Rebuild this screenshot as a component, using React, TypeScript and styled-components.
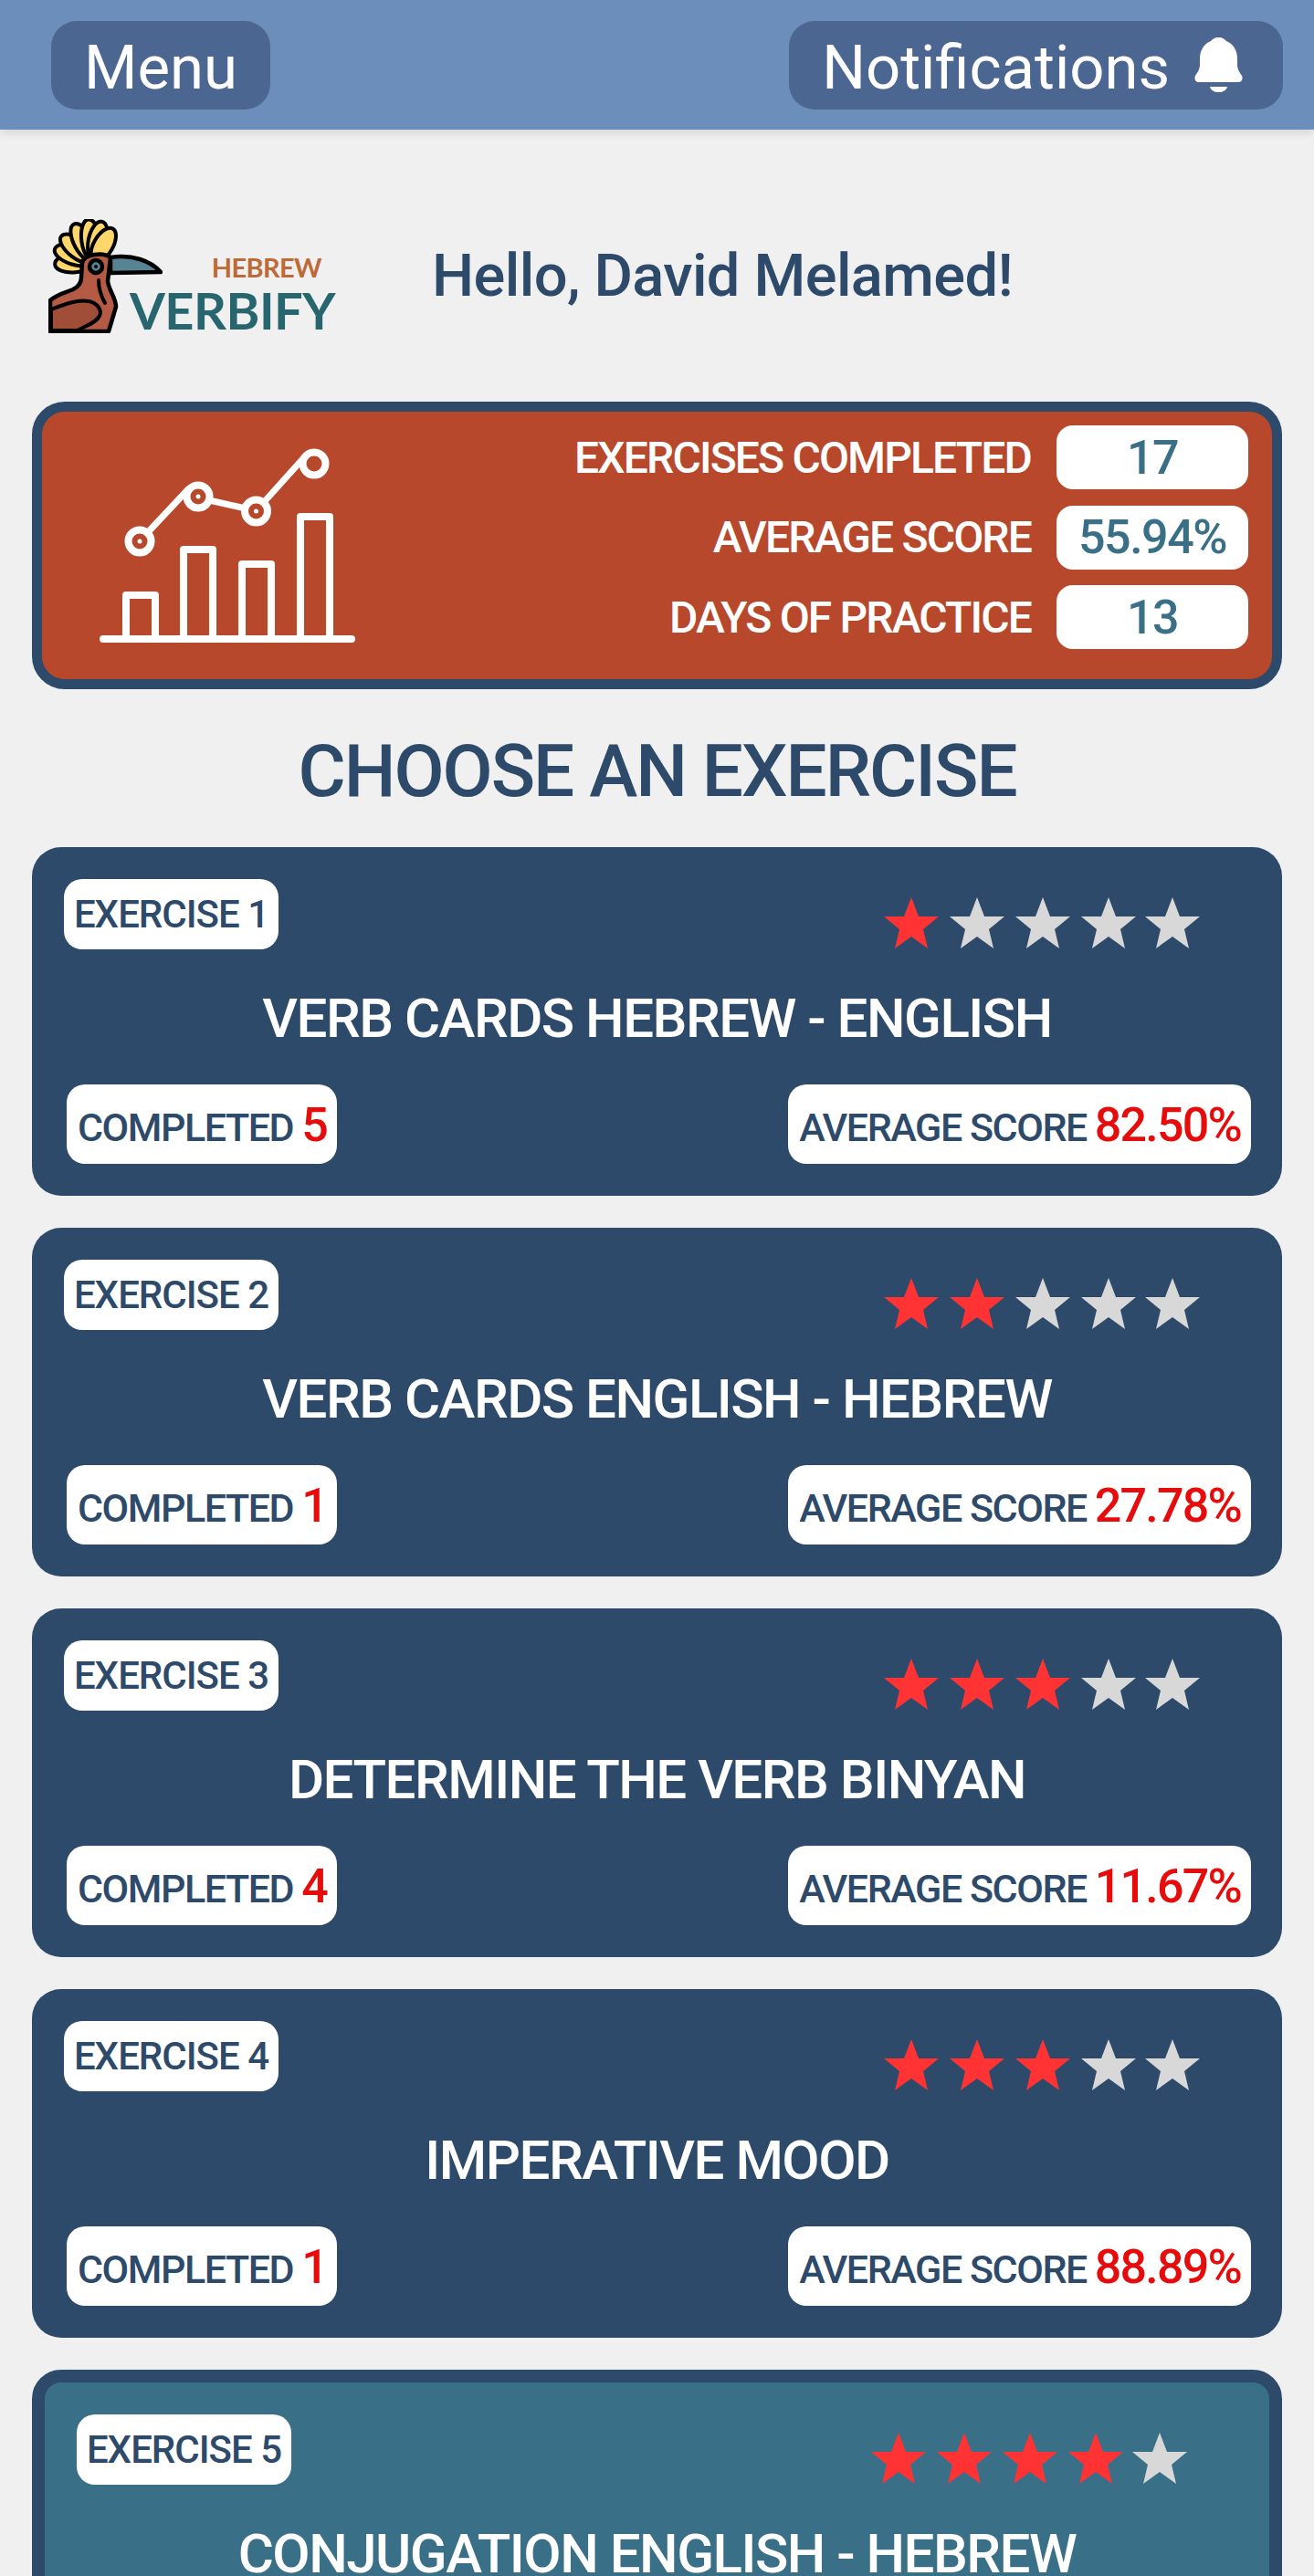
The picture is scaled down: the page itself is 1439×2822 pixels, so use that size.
import React from "react";
import styled, { createGlobalStyle } from "styled-components";

const GlobalStyle = createGlobalStyle`
  html, body {
    margin: 0;
    padding: 0;
    background: #f0f0f0;
  }
  * {
    box-sizing: border-box;
  }
`;

const Page = styled.div`
  width: 1439px;
  height: 2822px;
  overflow: hidden;
  background: #f0f0f0;
  font-family: Roboto, "Liberation Sans", sans-serif;
`;

const Header = styled.header`
  display: flex;
  justify-content: space-between;
  align-items: center;
  height: 142px;
  padding: 0 34px 0 56px;
  background: #6c8eba;
  box-shadow: 0 3px 10px rgba(0, 0, 0, 0.12);
`;

const HeaderButton = styled.button`
  display: flex;
  align-items: center;
  gap: 27px;
  height: 97px;
  padding: 6px 36px 0;
  border: none;
  border-radius: 28px;
  background: #4b6691;
  color: #ffffff;
  font-family: inherit;
  font-size: 67px;
  font-weight: 400;

  svg {
    margin-top: -6px;
    margin-right: 8px;
  }
`;

const Intro = styled.div`
  display: flex;
  align-items: center;
  height: 298px;
  padding: 22px 0 0 53px;
`;

const Logo = styled.div`
  display: flex;
  align-items: flex-end;
  width: 420px;
  height: 125px;
`;

const LogoWords = styled.div`
  display: flex;
  flex-direction: column;
  align-items: flex-end;
  width: 224px;
  margin-left: -35px;
`;

const LogoSmall = styled.span`
  margin-right: 15px;
  color: #bd6a37;
  font-family: Lato, sans-serif;
  font-size: 29px;
  font-weight: 700;
  letter-spacing: -0.6px;
  line-height: 29px;
`;

const LogoBig = styled.span`
  margin-top: 8px;
  color: #27666f;
  font-family: Lato, sans-serif;
  font-size: 56px;
  font-weight: 700;
  letter-spacing: -0.5px;
  line-height: 50px;
`;

const Greeting = styled.h1`
  margin: 0;
  color: #2e4a6b;
  font-size: 65px;
  font-weight: 500;
  letter-spacing: -0.6px;
`;

const Content = styled.main`
  display: flex;
  flex-direction: column;
  padding: 0 35px;
`;

const StatsCard = styled.section`
  display: flex;
  justify-content: space-between;
  align-items: center;
  height: 315px;
  padding: 0 26px 0 63px;
  border: 11px solid #2e4a6b;
  border-radius: 36px;
  background: #b8482b;
`;

const StatsList = styled.div`
  display: grid;
  grid-template-columns: auto 210px;
  column-gap: 28px;
  row-gap: 17.5px;
  align-items: center;
  align-self: flex-start;
  margin-top: 15px;
`;

const StatLabel = styled.span`
  color: #ffffff;
  font-size: 48px;
  font-weight: 500;
  letter-spacing: -1.85px;
  text-align: right;
`;

const StatValue = styled.span`
  display: flex;
  justify-content: center;
  align-items: center;
  height: 70px;
  border-radius: 18px;
  background: #ffffff;
  color: #3a7087;
  font-size: 52px;
  font-weight: 500;
  letter-spacing: -1.5px;
`;

const Heading = styled.h2`
  margin: 45px 0 38px;
  color: #2e4a6b;
  font-size: 80px;
  font-weight: 500;
  letter-spacing: -2px;
  line-height: 90px;
  text-align: center;
`;

const Cards = styled.div`
  display: flex;
  flex-direction: column;
  gap: 35px;
`;

const Card = styled.article<{ $active?: boolean }>`
  display: flex;
  flex-direction: column;
  flex-shrink: 0;
  height: ${p => (p.$active ? "410px" : "382px")};
  padding: 35px;
  border: ${p => (p.$active ? "14px solid #2e4a6b" : "none")};
  border-radius: 32px;
  background: ${p => (p.$active ? "#3a7087" : "#2e4a6b")};
`;

const CardTop = styled.div`
  display: flex;
  justify-content: space-between;
  align-items: flex-start;
  height: 77px;
`;

const ExerciseTag = styled.span`
  display: flex;
  justify-content: center;
  align-items: center;
  width: 235px;
  height: 77px;
  border-radius: 20px;
  background: #ffffff;
  color: #2e4a6b;
  font-size: 42px;
  font-weight: 500;
  letter-spacing: -1px;
`;

const Stars = styled.div`
  display: flex;
  gap: 12px;
  margin-top: 20px;
  margin-right: 55px;

  svg:last-child {
    margin-left: -2px;
  }
`;

const CardTitle = styled.h3`
  margin: 41px 0 37px;
  color: #ffffff;
  font-size: 60px;
  font-weight: 500;
  letter-spacing: -1.5px;
  line-height: 70px;
  text-align: center;
`;

const CardBottom = styled.div`
  display: flex;
  justify-content: space-between;
  margin: 0 -1px 0 3px;
`;

const ResultPill = styled.span`
  display: flex;
  align-items: baseline;
  gap: 9px;
  height: 87px;
  padding: 14px 11px 0 12px;
  border-radius: 20px;
  background: #ffffff;
  color: #2e4a6b;
  font-size: 43px;
  font-weight: 500;
  letter-spacing: -1.45px;
`;

const ResultValue = styled.span`
  color: #e60c0c;
  font-size: 52px;
  letter-spacing: -1.8px;
`;

const Star = ({ on }: { on: boolean }) => (
  <svg width="60" height="56" viewBox="0 0 60 56">
    <polygon
      points="30,0 38,21 60,21 43,35 48,56 30,43 12,56 17,35 0,21 22,21"
      fill={on ? "#ff3333" : "#d8d8d8"}
    />
  </svg>
);

const Bell = () => (
  <svg width="53" height="60" viewBox="0 0 53 60" fill="#fff">
    <path d="M26.5 0 C31 0 33 2 35 4 C42 6.5 47 14 47 23 L47 30 C47 35 50 39 52 42 C53.5 45 52 49 48 49 L5 49 C1 49 -0.5 45 1 42 C3 39 6 35 6 30 L6 23 C6 14 11 6.5 18 4 C20 2 22 0 26.5 0 Z" />
    <path d="M17 54 H36 C35 58 31 60 26.5 60 C22 60 18 58 17 54 Z" />
  </svg>
);

// crest feathers fan out from the top of the head: [angle, length]
const FEATHERS = [
  [-95, 43],
  [-73, 45],
  [-53, 45],
  [-29, 46],
  [-8, 46],
  [11, 44],
  [30, 41],
];

// bird from the logo
const Hoopoe = () => (
  <svg width="125" height="125" viewBox="0 0 125 125" style={{ flexShrink: 0 }}>
    {FEATHERS.map(([angle, len]) => (
      <ellipse
        key={angle}
        cx="50"
        cy={46 - len / 2}
        rx="10.5"
        ry={len / 2}
        fill="#fdd76b"
        stroke="#000"
        strokeWidth="4"
        transform={`rotate(${angle} 50 46)`}
      />
    ))}
    <path
      d="M68 42 C92 38 112 46 123 58 L68 59 Z"
      fill="#568492"
      stroke="#000"
      strokeWidth="4.5"
      strokeLinejoin="round"
    />
    <path
      d="M2 123 L2 89 C10 82 20 80 27 77 C33 74 36 70 36 64 L37 48 C39 38 60 36 68 42 L65 68 C66 78 74 86 74 96 L66 123 Z"
      fill="#b55a45"
      stroke="#000"
      strokeWidth="4.5"
      strokeLinejoin="round"
    />
    <path
      d="M3 99 C16 94 30 88 44 90 C54 92 59 100 56 106 C52 114 42 116 32 122 L3 122 Z"
      fill="#a04e37"
      stroke="#000"
      strokeWidth="4"
      strokeLinejoin="round"
    />
    <path d="M55 67 C55 76 58 85 62 92" fill="none" stroke="#000" strokeWidth="4" strokeLinecap="round" />
    <circle cx="52" cy="52" r="7" fill="#568492" stroke="#000" strokeWidth="4.5" />
    <circle cx="52" cy="52" r="2" fill="#000" />
  </svg>
);

const DOTS = [
  [44, 102],
  [108, 53],
  [171.5, 69],
];

const GrowthChart = () => (
  <svg width="280" height="213" viewBox="0 0 280 213" fill="none" stroke="#fff" strokeWidth="8">
    <path d="M4 209 H276" strokeLinecap="round" />
    <path d="M29 209 V161 H61 V209" strokeLinejoin="round" />
    <path d="M92 209 V111 H124 V209" strokeLinejoin="round" />
    <path d="M156 209 V127 H188 V209" strokeLinejoin="round" />
    <path d="M220 209 V75 H252 V209" strokeLinejoin="round" />
    <path d="M54 91 L98 44" strokeWidth="7" />
    <path d="M120 57 L160 66" strokeWidth="7" />
    <path d="M181 58 L225 9" strokeWidth="7" />
    {DOTS.map(([x, y]) => (
      <React.Fragment key={x}>
        <circle cx={x} cy={y} r="12.5" />
        <circle cx={x} cy={y} r="2.5" fill="#fff" stroke="none" />
      </React.Fragment>
    ))}
    <circle cx="235" cy="17" r="12.5" />
  </svg>
);

const STATS = [
  { label: "EXERCISES COMPLETED", value: "17" },
  { label: "AVERAGE SCORE", value: "55.94%" },
  { label: "DAYS OF PRACTICE", value: "13" },
];

const EXERCISES = [
  { id: 1, title: "VERB CARDS HEBREW - ENGLISH", stars: 1, completed: "5", score: "82.50%" },
  { id: 2, title: "VERB CARDS ENGLISH - HEBREW", stars: 2, completed: "1", score: "27.78%" },
  { id: 3, title: "DETERMINE THE VERB BINYAN", stars: 3, completed: "4", score: "11.67%" },
  { id: 4, title: "IMPERATIVE MOOD", stars: 3, completed: "1", score: "88.89%" },
  { id: 5, title: "CONJUGATION ENGLISH - HEBREW", stars: 4, active: true },
];

export default function App() {
  return (
    <Page>
      <GlobalStyle />
      <Header>
        <HeaderButton>Menu</HeaderButton>
        <HeaderButton>
          Notifications
          <Bell />
        </HeaderButton>
      </Header>
      <Intro>
        <Logo>
          <Hoopoe />
          <LogoWords>
            <LogoSmall>HEBREW</LogoSmall>
            <LogoBig>VERBIFY</LogoBig>
          </LogoWords>
        </Logo>
        <Greeting>Hello, David Melamed!</Greeting>
      </Intro>
      <Content>
        <StatsCard>
          <GrowthChart />
          <StatsList>
            {STATS.map(s => (
              <React.Fragment key={s.label}>
                <StatLabel>{s.label}</StatLabel>
                <StatValue>{s.value}</StatValue>
              </React.Fragment>
            ))}
          </StatsList>
        </StatsCard>
        <Heading>CHOOSE AN EXERCISE</Heading>
        <Cards>
          {EXERCISES.map(ex => (
            <Card key={ex.id} $active={ex.active}>
              <CardTop>
                <ExerciseTag>EXERCISE {ex.id}</ExerciseTag>
                <Stars>
                  {[1, 2, 3, 4, 5].map(n => (
                    <Star key={n} on={n <= ex.stars} />
                  ))}
                </Stars>
              </CardTop>
              <CardTitle>{ex.title}</CardTitle>
              {ex.completed && (
                <CardBottom>
                  <ResultPill>
                    COMPLETED <ResultValue>{ex.completed}</ResultValue>
                  </ResultPill>
                  <ResultPill>
                    AVERAGE SCORE <ResultValue>{ex.score}</ResultValue>
                  </ResultPill>
                </CardBottom>
              )}
            </Card>
          ))}
        </Cards>
      </Content>
    </Page>
  );
}
